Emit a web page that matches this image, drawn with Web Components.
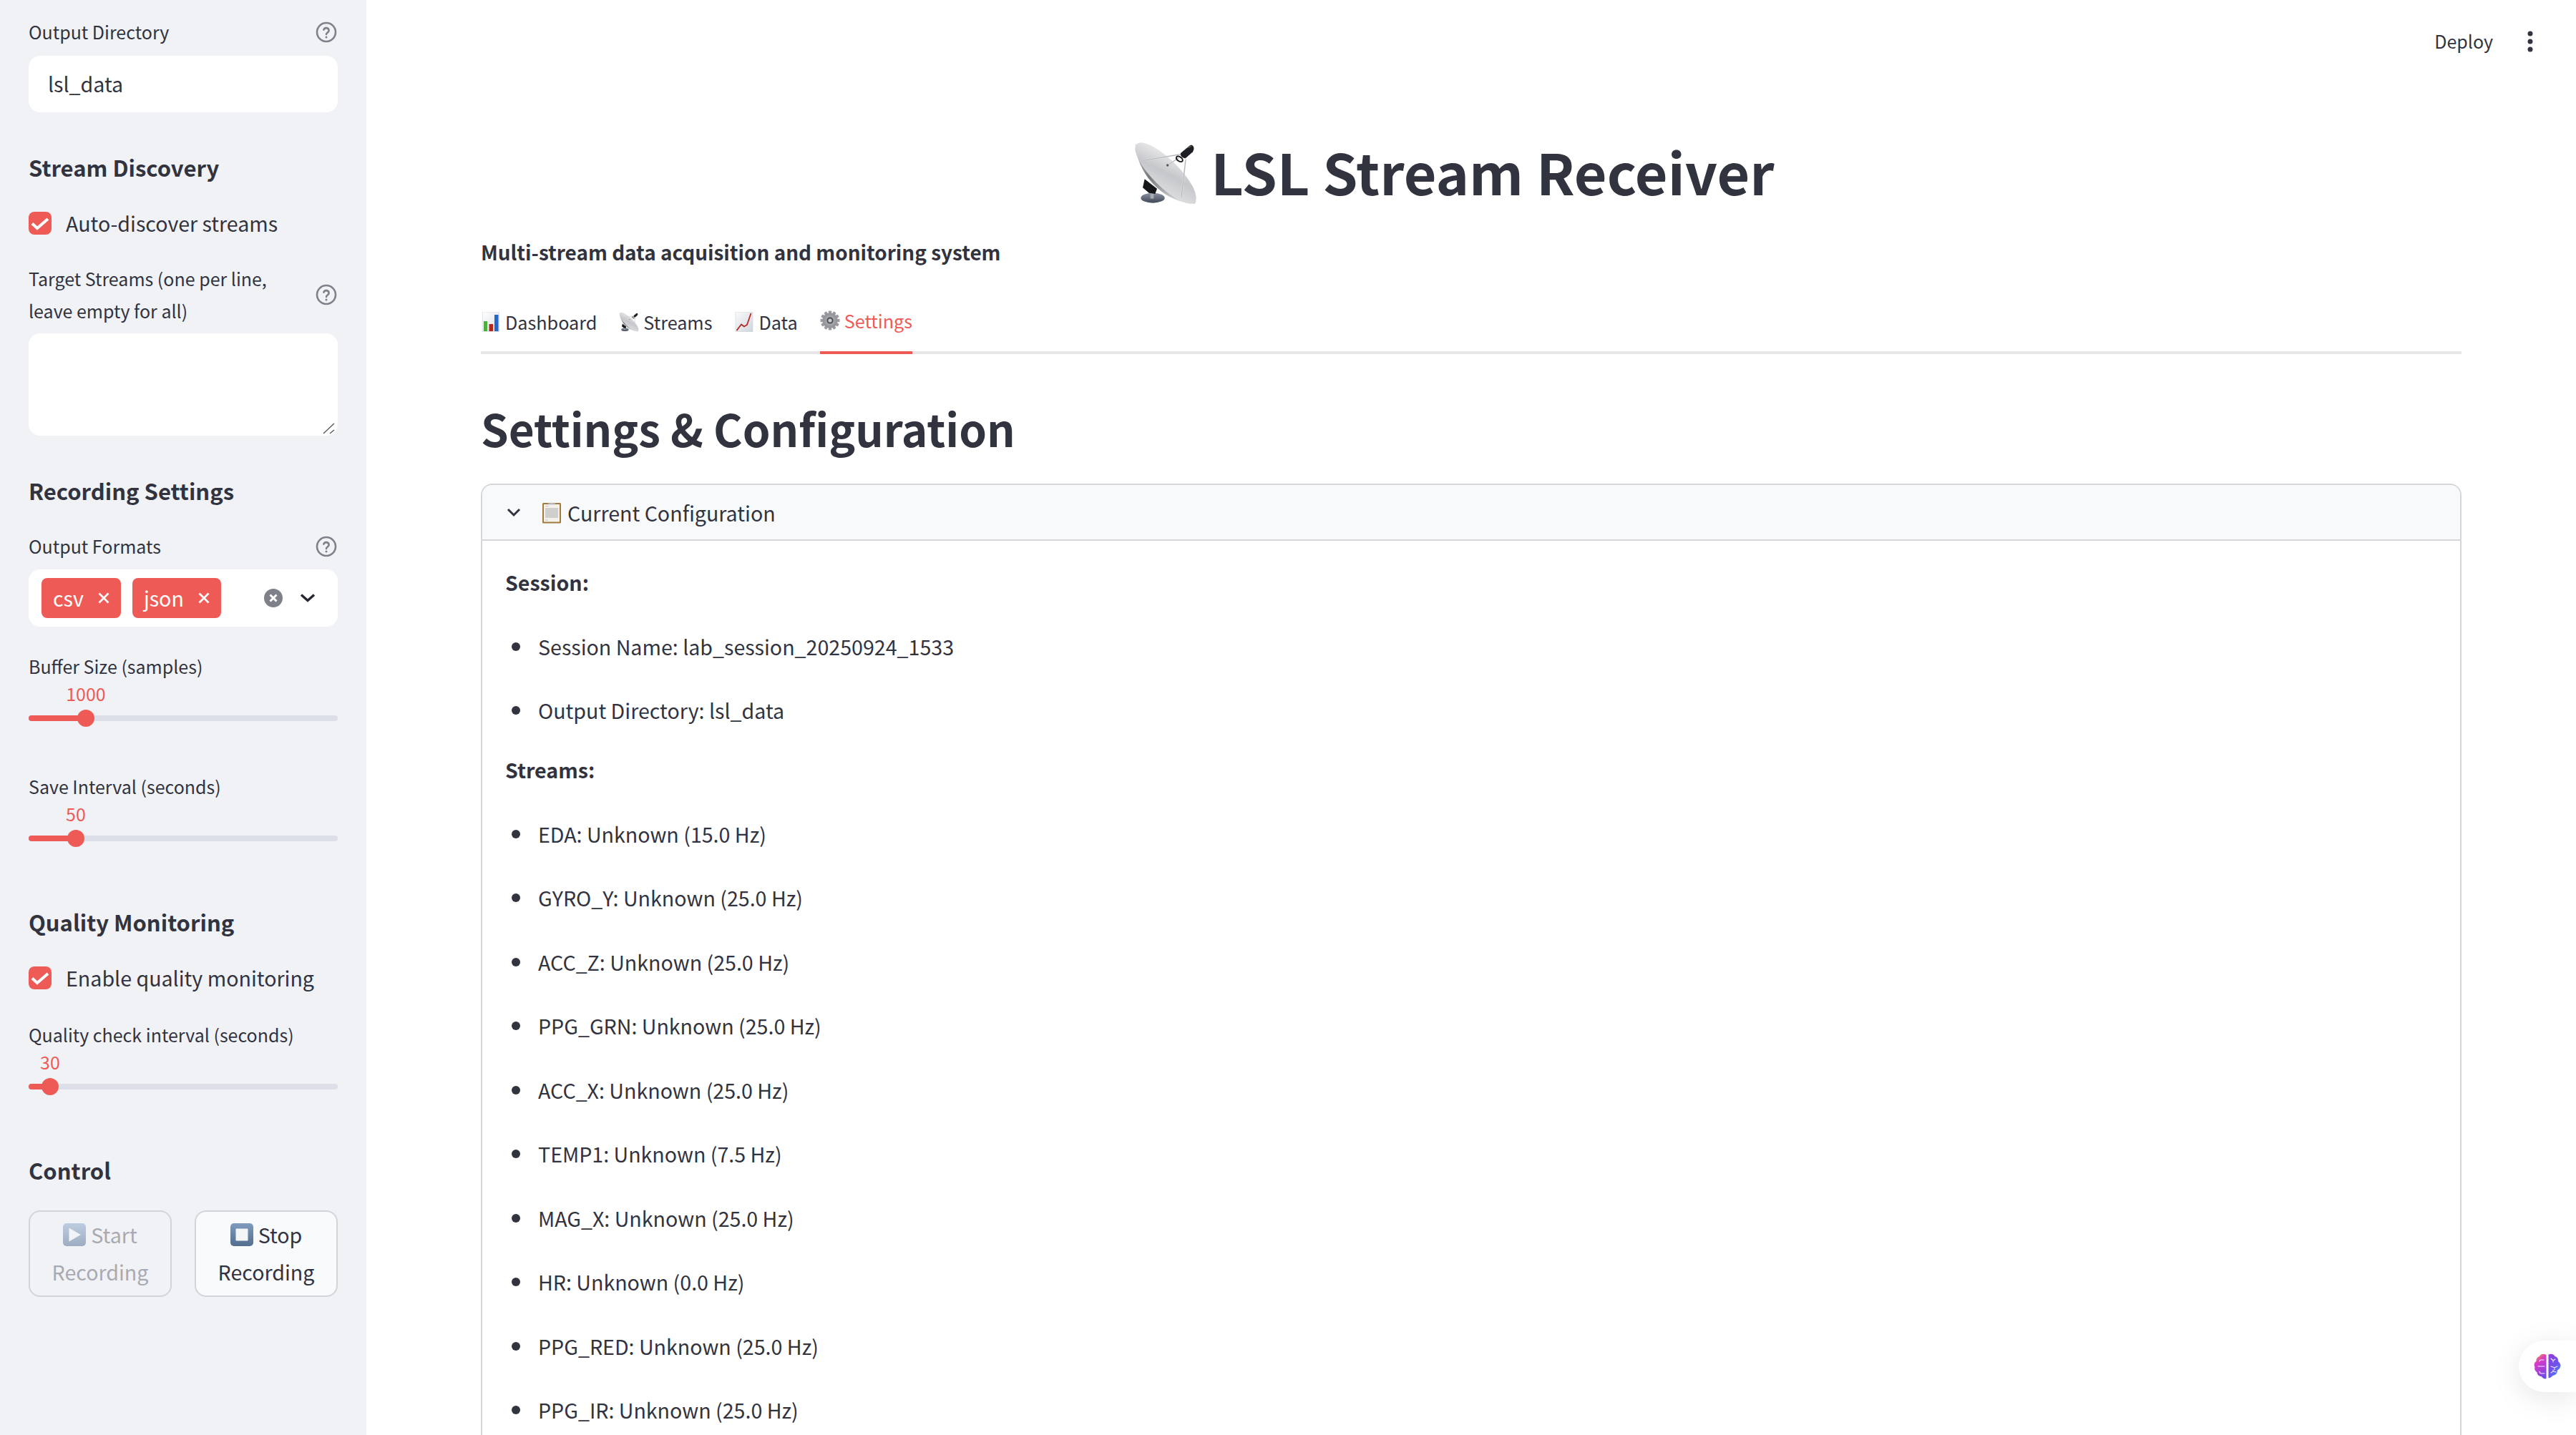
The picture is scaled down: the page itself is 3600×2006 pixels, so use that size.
<!DOCTYPE html>
<html lang="en"><head><meta charset="utf-8"><title>LSL Stream Receiver</title>
<style>
html,body{margin:0;padding:0;height:100%;overflow:hidden;background:#fff;color:#31333f;font-family:"Noto Sans CJK SC","Noto Sans",sans-serif;font-size:28.6px}
</style></head><body>
<st-app>
  <st-sidebar slot="side">
    <st-label help>Output Directory</st-label>
    <st-input style="margin-top:11px">lsl_data</st-input>
    <st-h3 style="margin-top:52px">Stream Discovery</st-h3>
    <st-check style="margin-top:30px">Auto-discover streams</st-check>
    <st-label help style="margin-top:33px">Target Streams (one per line, leave empty for all)</st-label>
    <st-textarea style="margin-top:9px"></st-textarea>
    <st-h3 style="margin-top:52px">Recording Settings</st-h3>
    <st-label help style="margin-top:30px">Output Formats</st-label>
    <st-multiselect style="margin-top:10px"><st-chip>csv</st-chip><st-chip>json</st-chip></st-multiselect>
    <st-slider style="margin-top:33px" value="1000" pos="80">Buffer Size (samples)</st-slider>
    <st-slider style="margin-top:38px" value="50" pos="66">Save Interval (seconds)</st-slider>
    <st-h3 style="margin-top:57px">Quality Monitoring</st-h3>
    <st-check style="margin-top:30px">Enable quality monitoring</st-check>
    <st-slider style="margin-top:35px" value="30" pos="30">Quality check interval (seconds)</st-slider>
    <st-h3 style="margin-top:57px">Control</st-h3>
    <st-btn-row style="margin-top:31px">
      <st-button disabled icon="play">Start Recording</st-button>
      <st-button icon="stop">Stop Recording</st-button>
    </st-btn-row>
  </st-sidebar>
  <st-main slot="main">
    <st-toolbar></st-toolbar>
    <st-title>LSL Stream Receiver</st-title>
    <st-subtitle>Multi-stream data acquisition and monitoring system</st-subtitle>
    <st-tabs>
      <st-tab icon="bars">Dashboard</st-tab>
      <st-tab icon="dish">Streams</st-tab>
      <st-tab icon="chart">Data</st-tab>
      <st-tab icon="gear" active>Settings</st-tab>
    </st-tabs>
    <st-h2>Settings &amp; Configuration</st-h2>
    <st-expander title="Current Configuration">
      <st-para>Session:</st-para>
      <st-item>Session Name: lab_session_20250924_1533</st-item>
      <st-item>Output Directory: lsl_data</st-item>
      <st-para style="margin-top:32px">Streams:</st-para>
      <st-item>EDA: Unknown (15.0 Hz)</st-item>
      <st-item>GYRO_Y: Unknown (25.0 Hz)</st-item>
      <st-item>ACC_Z: Unknown (25.0 Hz)</st-item>
      <st-item>PPG_GRN: Unknown (25.0 Hz)</st-item>
      <st-item>ACC_X: Unknown (25.0 Hz)</st-item>
      <st-item>TEMP1: Unknown (7.5 Hz)</st-item>
      <st-item>MAG_X: Unknown (25.0 Hz)</st-item>
      <st-item>HR: Unknown (0.0 Hz)</st-item>
      <st-item>PPG_RED: Unknown (25.0 Hz)</st-item>
      <st-item>PPG_IR: Unknown (25.0 Hz)</st-item>
    </st-expander>
    <st-fab></st-fab>
  </st-main>
</st-app>
<script>
const HELP=`<svg width="32" height="32" viewBox="0 0 32 32" fill="none" stroke="#7e808a" stroke-width="2.6" stroke-linecap="round"><circle cx="16" cy="16" r="13"/><path d="M12.4 12.6a3.7 3.7 0 0 1 7.2 1.1c0 2.5-3.6 3-3.6 5.2"/><circle cx="16" cy="23" r=".7" stroke-width="1.6" fill="#7e808a"/></svg>`;
const EMOJI={
dish:`<svg viewBox="135 72 270 270" width="100%" height="100%"><defs>
<linearGradient id="a" x1="0" y1="0" x2="1" y2="1"><stop offset="0" stop-color="#f2f2f3"/><stop offset=".5" stop-color="#c6c7ca"/><stop offset="1" stop-color="#e4e5e7"/></linearGradient>
<linearGradient id="b" x1="0" y1="0" x2=".6" y2="1"><stop offset="0" stop-color="#dcdddf"/><stop offset=".5" stop-color="#77787c"/><stop offset="1" stop-color="#d4d5d7"/></linearGradient>
<linearGradient id="c" x1="0" y1="0" x2="0" y2="1"><stop offset="0" stop-color="#8b93a3"/><stop offset="1" stop-color="#3f4654"/></linearGradient></defs>
<ellipse cx="216" cy="311" rx="50" ry="21" fill="url(#c)"/><rect x="206" y="280" width="14" height="34" fill="#a8abb0"/>
<path d="M182 232l52 40-8 22-26-4-26-22z" fill="#16171a"/>
<path d="M143 86C146 175 226 322 390 336 404 330 398 296 370 260 330 205 200 68 143 86z" fill="url(#b)"/>
<ellipse cx="270" cy="207" rx="172" ry="56" transform="rotate(45 270 207)" fill="url(#a)"/>
<path d="M178 154L332 128M336 308L354 150M278 174L326 142" stroke="#e2e3e5" stroke-width="6" fill="none"/>
<path d="M178 154L332 128M336 308L354 150M278 174L326 142" stroke="#85878c" stroke-width="1.6" fill="none"/>
<circle cx="278" cy="174" r="5" fill="#55575c"/><ellipse cx="328" cy="148" rx="15" ry="9" transform="rotate(35 328 148)" fill="none" stroke="#15161a" stroke-width="6"/>
<path d="M334 122L370 92c10-7 20 2 18 16l-4 10-30 26c-8 4-28-12-20-22z" fill="#1d1f24"/><path d="M362 100l16-6" stroke="#777" stroke-width="3"/></svg>`,
bars:`<svg viewBox="0 0 28 28" width="100%" height="100%"><defs><linearGradient id="t" x1="0" y1="0" x2="1" y2="1"><stop offset="0" stop-color="#fff"/><stop offset="1" stop-color="#d9dfe6"/></linearGradient></defs><rect x="2.5" y="0" width="23" height="28" fill="url(#t)" stroke="#cfd4da" stroke-width=".6"/><rect x="4" y="13" width="5" height="14" fill="#4fae3c"/><rect x="11.500" y="17" width="5.500" height="10" fill="#b5261b"/><rect x="19" y="4" width="5.500" height="23" fill="#2566c9"/></svg>`,
chart:`<svg viewBox="0 0 28 28" width="100%" height="100%"><defs><linearGradient id="t" x1="0" y1="0" x2="1" y2="1"><stop offset="0" stop-color="#fafbfc"/><stop offset="1" stop-color="#cfd5dc"/></linearGradient></defs><rect x="2" y="0" width="24" height="28" fill="url(#t)" stroke="#cfd4da" stroke-width=".6"/><path d="M3.500 26L10 17.500 14 20.500 18 18 23.500 2" fill="none" stroke="#b4231c" stroke-width="1.700"/></svg>`,
gear:`<svg viewBox="0 0 28 28" width="100%" height="100%"><defs><radialGradient id="g"><stop offset=".2" stop-color="#44474c"/><stop offset=".45" stop-color="#a5a7ab"/><stop offset="1" stop-color="#8e9095"/></radialGradient></defs><g fill="#9a9ca1">${[0,30,60,90,120,150].map(r=>`<rect x="11.800" y="0.500" width="4.400" height="27" rx=".8" transform="rotate(${r} 14 14)"/>`).join('')}</g><circle cx="14" cy="14" r="10.500" fill="url(#g)"/><circle cx="14" cy="14" r="4.500" fill="#4b4e53"/><circle cx="14" cy="14" r="2.600" fill="#c9cbce"/></svg>`,
clip:`<svg viewBox="0 0 28 32" width="100%" height="100%"><rect x="1" y="3" width="26" height="28.500" rx="1.500" fill="#a17a3c"/><rect x="3" y="5" width="22" height="24.500" fill="#f3f1e9"/><rect x="5" y="10" width="18" height="14" fill="#cfcfcd"/><path d="M5 7.500h5M5 27h4" stroke="#bbb" stroke-width=".8"/><path d="M9 5V3.500h3.500a1.700 1.700 0 0 1 3 0H19V5.500H9z" fill="#b8c0c8"/></svg>`,
play:`<svg viewBox="0 0 32 32" width="100%" height="100%"><defs><linearGradient id="p" x1="0" y1="0" x2="0" y2="1"><stop offset="0" stop-color="#93b0cf"/><stop offset="1" stop-color="#5a7696"/></linearGradient></defs><rect width="32" height="32" rx="5" fill="url(#p)"/><path d="M8.500 6.500L25 16 8.500 25.500z" fill="#f2f4f7"/></svg>`,
stop:`<svg viewBox="0 0 32 32" width="100%" height="100%"><defs><linearGradient id="p" x1="0" y1="0" x2="0" y2="1"><stop offset="0" stop-color="#7f9cbd"/><stop offset="1" stop-color="#536d8e"/></linearGradient></defs><rect width="32" height="32" rx="5" fill="url(#p)"/><rect x="7.500" y="7.500" width="17" height="17" rx="1" fill="#f4f5f7"/></svg>`,
brain:`<svg viewBox="0 0 38 36" width="100%" height="100%"><defs><linearGradient id="l" x1=".3" y1="0" x2=".7" y2="1"><stop offset="0" stop-color="#f0a03a"/><stop offset=".28" stop-color="#d83cc4"/><stop offset=".7" stop-color="#a040dc"/><stop offset="1" stop-color="#6a4de8"/></linearGradient><linearGradient id="r" x1=".1" y1="0" x2=".8" y2="1"><stop offset="0" stop-color="#8f3fd8"/><stop offset=".6" stop-color="#6a55ee"/><stop offset="1" stop-color="#3f9af5"/></linearGradient></defs><path d="M17.500 2c-3-2-8-1.500-9.500 2-3 .5-5 3.500-4.500 6.500C1 12.500-.5 16 1.500 19c-1 3 .5 6 3 7 0 3.500 2.500 6 6 6 2.500 3 5 4 7 3z" fill="url(#l)"/><path d="M20.500 1.500c3-1.500 7.500-1 9 2.500 3 .5 5 3.500 4.500 7 2.500 2 4.500 5 3 8-.5 2.500-2.500 3.500-4 4.500 0 5-3 7-6.500 7.500-2 2.500-4 3.500-6 3z" fill="url(#r)"/><path d="M14 9h-4a2 2 0 0 0-2 2M15 18H6M15 28h-4a3 3 0 0 1-3-3M24 7l3 3 3-2M27 10v2M24 18l5 2 4-2M29 20v3M24 27l3-2 4 1M27 25v-2" fill="none" stroke="#f4ecff" stroke-width="1.100" stroke-linecap="round"/></svg>`
};
function def(name,html){
  customElements.define(name,class extends HTMLElement{
    constructor(){super();this.attachShadow({mode:'open'});}
    connectedCallback(){
      if(this.shadowRoot.childNodes.length) return;
      this.shadowRoot.innerHTML=typeof html==='function'?html(this):html;
    }
  });
}
def('st-emoji',h=>`<style>:host{display:inline-flex;align-items:center;justify-content:center;flex:none}</style>${EMOJI[h.getAttribute('name')]}`);
def('st-app',`<style>:host{display:flex;width:100vw;height:100vh;overflow:hidden}</style><slot name="side"></slot><slot name="main"></slot>`);
def('st-sidebar',`<style>:host{display:block;flex:none;box-sizing:border-box;width:512px;height:100%;padding:22px 40px;background:#f0f2f6;overflow:hidden}</style><slot></slot>`);
def('st-main',`<style>:host{display:block;position:relative;flex:1;min-width:0;height:100%;box-sizing:border-box;overflow:hidden;padding:0 160px}</style><slot></slot>`);
def('st-label',h=>`<style>:host{display:flex;align-items:center;justify-content:space-between;font-size:25px;line-height:45px;gap:20px}span{flex:1;padding-right:${h.textContent.length>30?'10px':'0'}}.h{width:32px;height:32px;flex:none}svg{display:block}</style><span><slot></slot></span>${h.hasAttribute('help')?`<div class="h">${HELP}</div>`:''}`);
def('st-input',`<style>:host{display:flex;align-items:center;box-sizing:border-box;height:79px;padding-left:27px;padding-bottom:2px;background:#fff;border-radius:16px;font-size:28.6px}</style><slot></slot>`);
def('st-h3',`<style>:host{display:block;font-size:31px;font-weight:700;line-height:50px;color:#31333f}</style><slot></slot>`);
def('st-check',`<style>:host{display:flex;align-items:center;gap:20px;font-size:28.6px;line-height:45px}.b{width:32px;height:32px;border-radius:8px;background:#ee5b56;flex:none}svg{display:block}</style><div class="b"><svg viewBox="0 0 32 32" width="32" height="32"><path d="M5 16.500l7 6.500L27 10" fill="none" stroke="#fff" stroke-width="4"/></svg></div><span><slot></slot></span>`);
def('st-textarea',`<style>:host{display:block;position:relative;height:143px;background:#fff;border-radius:16px}svg{position:absolute;right:3px;bottom:2px}</style><svg width="18" height="18" viewBox="0 0 18 18" fill="none" stroke="#555" stroke-width="1.300"><path d="M1 17L16 3M10 17l6-5"/></svg>`);
def('st-multiselect',`<style>:host{display:flex;align-items:center;position:relative;box-sizing:border-box;height:80px;padding-left:18px;gap:16px;background:#fff;border-radius:16px}.c{position:absolute;left:329px;top:27px}.d{position:absolute;left:379px;top:32px}svg{display:block}</style><slot></slot><svg class="c" width="26" height="26" viewBox="0 0 26 26"><circle cx="13" cy="13" r="13" fill="#7e808a"/><path d="M8.500 8.500l9 9M17.500 8.500l-9 9" stroke="#fff" stroke-width="3"/></svg><svg class="d" width="22" height="16" viewBox="0 0 22 16" fill="none" stroke="#262730" stroke-width="3.400"><path d="M2 3.500l9 8 9-8"/></svg>`);
def('st-chip',`<style>:host{display:flex;align-items:center;box-sizing:border-box;height:56px;padding:0 16px;gap:20px;border-radius:8px;background:#ee5b56;color:#fff;font-size:28.6px;line-height:54px}svg{display:block}</style><slot></slot><svg width="16" height="16" viewBox="0 0 16 16" stroke="#fff" stroke-width="2.600"><path d="M1.500 1.500l13 13M14.500 1.500l-13 13"/></svg>`);
def('st-slider',h=>{const p=+h.getAttribute('pos');return `<style>:host{display:block;position:relative;height:130px}.l{font-size:25px;line-height:45px}.v{position:absolute;top:43px;left:${p}px;transform:translateX(-50%);font-size:25px;line-height:34px;color:#ee5b56}.t{position:absolute;left:0;right:0;top:91px;height:8px;border-radius:4px;background:#dcdee8}.f{position:absolute;left:0;top:0;height:8px;width:${p}px;border-radius:4px 0 0 4px;background:#ee5b56}.k{position:absolute;left:${p-12}px;top:-8px;width:24px;height:24px;border-radius:50%;background:#ee5b56}</style><div class="l"><slot></slot></div><div class="v">${h.getAttribute('value')}</div><div class="t"><div class="f"></div><div class="k"></div></div>`});
def('st-btn-row',`<style>:host{display:flex;gap:32px}</style><slot></slot>`);
def('st-button',h=>{const d=h.hasAttribute('disabled');const t=h.textContent.split(' ');return `<style>:host{display:block;box-sizing:border-box;width:200px;height:121px;border:2px solid #d3d4d9;border-radius:16px;background:${d?'transparent':'#f9fafc'};color:${d?'#a9aab1':'#31333f'};font-size:28.6px;line-height:52px;text-align:center;padding-top:6px}div{display:flex;justify-content:center;align-items:center;gap:7px}st-emoji{width:32px;height:32px;opacity:${d?.55:1}}</style><div><st-emoji name="${h.getAttribute('icon')}"></st-emoji><span>${t[0]}</span></div><div>${t[1]}</div>`});
def('st-toolbar',`<style>:host{display:flex;align-items:center;justify-content:flex-end;height:116px;margin-right:-100px;gap:48px;font-size:25px}span{position:relative;top:-1px}svg{display:block}</style><span>Deploy</span><svg width="8" height="30" viewBox="0 0 8 30" fill="#31333f"><circle cx="4" cy="4" r="3.500"/><circle cx="4" cy="15" r="3.500"/><circle cx="4" cy="26" r="3.500"/></svg>`);
def('st-title',`<style>:host{display:flex;justify-content:center;align-items:center;gap:18px;margin-top:68px;padding-right:48px;font-size:78.9px;font-weight:700;line-height:110px}st-emoji{width:90px;height:90px;position:relative;top:3px}</style><st-emoji name="dish"></st-emoji><span><slot></slot></span>`);
def('st-subtitle',`<style>:host{display:block;margin-top:33px;font-size:27.9px;font-weight:700;line-height:51px}</style><slot></slot>`);
def('st-tabs',`<style>:host{display:flex;gap:31px;margin-top:30px;height:87px;box-sizing:border-box;border-bottom:4px solid #e6e6e8}</style><slot></slot>`);
def('st-tab',h=>{const a=h.hasAttribute('active');return `<style>:host{display:flex;align-items:center;height:87px;box-sizing:border-box;padding-bottom:4px;font-size:25.2px;color:${a?'#ee5b56':'#31333f'};${a?'border-bottom:4px solid #ee5b56;':''}}st-emoji{width:28px;height:28px;margin-right:6px;}</style><st-emoji name="${h.getAttribute('icon')}"></st-emoji><span><slot></slot></span>`});
def('st-h2',`<style>:host{display:block;margin-top:58px;font-size:62px;font-weight:700;line-height:90px}</style><slot></slot>`);
def('st-expander',h=>`<style>:host{display:block;margin-top:33px;border:2px solid #d5d6da;border-radius:16px;background:#fff}.h{display:flex;align-items:center;height:76px;background:#f8f9fb;border-bottom:2px solid #d5d6da;border-radius:14px 14px 0 0;padding-left:34px;font-size:28.6px}.c{width:20px;height:14px;margin-right:29px;display:block}.e{width:28px;height:32px;margin-right:8px}.b{padding:32px 32px 60px}</style><div class="h"><svg class="c" viewBox="0 0 20 14" fill="none" stroke="#31333f" stroke-width="3"><path d="M2 3l8 8 8-8"/></svg><st-emoji class="e" name="clip"></st-emoji><span>${h.getAttribute('title')}</span></div><div class="b"><slot></slot></div>`);
def('st-para',`<style>:host{display:block;font-size:28.6px;font-weight:700;line-height:51px}</style><slot></slot>`);
def('st-item',`<style>:host{display:flex;margin-top:38.500px;font-size:28.6px;line-height:51px}i{flex:none;width:12px;height:12px;border-radius:50%;background:#31333f;margin:20px 25px 0 9px}</style><i></i><span><slot></slot></span>`);
def('st-fab',`<style>:host{position:absolute;right:0;top:1874px;width:80px;height:72px;box-sizing:border-box;padding:18px 0 0 21px;background:#fff;border-radius:36px 0 0 36px;box-shadow:0 8px 40px rgba(0,0,0,.1)}st-emoji{width:38px;height:36px;display:flex}</style><st-emoji name="brain"></st-emoji>`);
</script>
</body></html>
